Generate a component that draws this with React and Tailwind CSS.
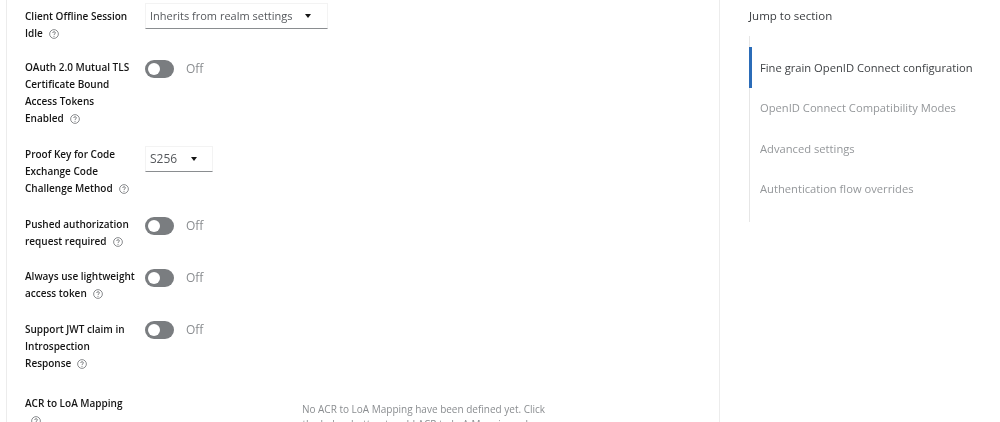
function Help() {
  return (
    <svg viewBox="0 0 16 16" className="ml-[6px] inline-block h-[10px] w-[10px] align-[-2px] text-[#55585c]" fill="none" stroke="currentColor">
      <circle cx="8" cy="8" r="7" strokeWidth="1.1" />
      <path d="M5.9 6.3c0-1.2 1-2 2.2-2s2.1.8 2.1 1.9c0 1.6-2.2 1.6-2.2 3.3" strokeWidth="1.2" />
      <circle cx="8" cy="11.6" r="0.8" fill="currentColor" stroke="none" />
    </svg>
  );
}

function Label({ lines }) {
  return (
    <div className="w-[120px] shrink-0 text-[10px] leading-[17px] font-semibold text-[#151515]">
      {lines.map((l, i) => (
        <div key={i} className="whitespace-nowrap">
          {l}
          {i === lines.length - 1 && <Help />}
        </div>
      ))}
    </div>
  );
}

function Toggle() {
  return (
    <div className="flex items-center gap-[12px]">
      <div className="flex h-[18px] w-[29px] items-center rounded-full bg-[#7a7d80] pl-[3px]">
        <div className="h-[12px] w-[12px] rounded-full bg-white" />
      </div>
      <span className="text-[12px] text-[#8a8d90]">Off</span>
    </div>
  );
}

function Select({ value, width, gap, size }) {
  return (
    <div className={`flex h-[26px] items-center border-b border-[#8a8d90] border-x border-t border-x-[#f3f3f3] border-t-[#f3f3f3] pl-[4px] text-[#55585c] ${size} ${width} ${gap}`}>
      <span className="whitespace-nowrap">{value}</span>
      <span className="h-0 w-0 border-x-[3.5px] border-t-[4px] border-x-transparent border-t-[#151515]" />
    </div>
  );
}

function Row({ lines, children, mt, ctlMt }) {
  return (
    <div className={`flex ${mt}`}>
      <Label lines={lines} />
      <div className={ctlMt}>{children}</div>
    </div>
  );
}

export default function App() {
  return (
    <div className="flex h-[422px] w-[1000px] overflow-hidden bg-white blur-[0.35px] [font-family:'Open_Sans','Noto_Sans',sans-serif]">
      <main className="ml-[6px] h-full w-[714px] shrink-0 border-x border-[#ececec] pl-[18px] pt-[8px]">
        <Row lines={["Client Offline Session", "Idle"]} ctlMt="-mt-[5px]">
          <Select value="Inherits from realm settings" width="w-[183px]" gap="gap-[12px]" size="text-[11px]" />
        </Row>
        <Row lines={["OAuth 2.0 Mutual TLS", "Certificate Bound", "Access Tokens", "Enabled"]} mt="mt-[17px]" ctlMt="mt-[1px]">
          <Toggle />
        </Row>
        <Row lines={["Proof Key for Code", "Exchange Code", "Challenge Method"]} mt="mt-[19px]" ctlMt="mt-0">
          <Select value="S256" width="w-[68px]" gap="gap-[14px]" size="text-[12px]" />
        </Row>
        <Row lines={["Pushed authorization", "request required"]} mt="mt-[19px]" ctlMt="mt-[1px]">
          <Toggle />
        </Row>
        <Row lines={["Always use lightweight", "access token"]} mt="mt-[18px]" ctlMt="mt-[1px]">
          <Toggle />
        </Row>
        <Row lines={["Support JWT claim in", "Introspection", "Response"]} mt="mt-[19px]" ctlMt="mt-0">
          <Toggle />
        </Row>
        <div className="mt-[23px] flex">
          <Label lines={["ACR to LoA Mapping", ""]} />
          <div className="w-[557px] pt-[7px] text-center text-[10px] leading-[15px] text-[#8a8d90]">
            <div className="whitespace-nowrap">No ACR to LoA Mapping have been defined yet. Click</div>
            <div className="whitespace-nowrap">the below button to add ACR to LoA Mapping values</div>
          </div>
        </div>
      </main>
      <aside className="pl-[29px] pt-[8px]">
        <div className="text-[11.5px] leading-[16px] text-[#3a3d40]">Jump to section</div>
        <nav className="mt-[12px] flex h-[186px] flex-col border-l border-[#e6e6e6] pt-[11px] text-[11.2px]">
          <a className="-ml-px flex h-[41px] items-center border-l-[3px] border-[#2b6cb8] pt-px pl-[8px] text-[#3f4245]">Fine grain OpenID Connect configuration</a>
          <a className="flex h-[40px] items-center pl-[10px] text-[#94979a]">OpenID Connect Compatibility Modes</a>
          <a className="flex h-[41px] items-center pt-px pl-[10px] text-[#94979a]">Advanced settings</a>
          <a className="flex h-[40px] items-center pt-px pl-[10px] text-[#94979a]">Authentication flow overrides</a>
        </nav>
      </aside>
    </div>
  );
}
